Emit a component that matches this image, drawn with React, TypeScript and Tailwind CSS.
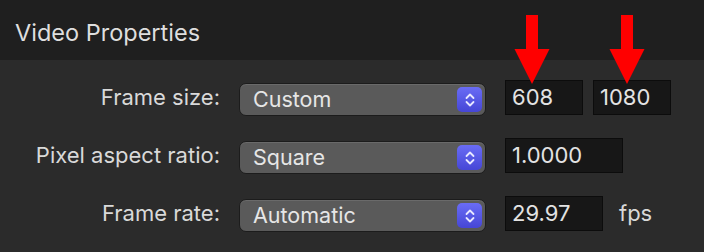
import React from "react";

const font = { fontFamily: "Inter, 'Noto Sans', sans-serif" };

function Stepper() {
  return (
    <div className="w-[25px] h-[25px] rounded-[5px] bg-gradient-to-b from-[#6a6cf5] to-[#4646d6] flex items-center justify-center">
      <svg width="12" height="16" viewBox="0 0 12 16" fill="none" stroke="#e8e8ff" strokeWidth="1.8" strokeLinecap="round" strokeLinejoin="round">
        <path d="M2.5 6 L6 2.5 L9.5 6" />
        <path d="M2.5 10 L6 13.5 L9.5 10" />
      </svg>
    </div>
  );
}

function Popup({ value }: { value: string }) {
  return (
    <div className="w-[247px] h-[33px] rounded-[7px] bg-[#5a5a5a] border border-[#1c1c1c] shadow-[inset_0_1px_0_#6a6a6a] flex items-center justify-between pl-[13px] pr-[3px]">
      <span className="text-[21.5px] text-[#e6e6e6]">{value}</span>
      <Stepper />
    </div>
  );
}

function Field({ value, w }: { value: string; w: string }) {
  return (
    <div className={`${w} h-[35px] bg-[#171717] border border-[#0c0c0c] flex items-center pl-[6px] text-[22px] text-[#e3e3e3]`}>
      {value}
    </div>
  );
}

function Arrow() {
  return (
    <svg width="36" height="70" viewBox="0 0 36 70" className="block">
      <rect x="12" y="0" width="12" height="36" fill="#ff0000" />
      <polygon points="0.5,34 35.5,34 18,69" fill="#ff0000" />
    </svg>
  );
}

export default function App() {
  return (
    <div className="w-[704px] h-[252px] bg-[#2b2b2b] relative overflow-hidden" style={font}>
      <div className="h-[60px] bg-[#1f1f1f] flex items-center pl-[15px] pt-[6px]">
        <span className="text-[23.5px] text-[#dedede]">Video Properties</span>
      </div>
      <div className="flex flex-col pt-[20px]">
        <div className="flex items-center h-[35px]">
          <div className="w-[220px] text-right text-[22px] text-[#d9d9d9]">Frame size:</div>
          <div className="ml-[19px] mt-[4px]"><Popup value="Custom" /></div>
          <div className="ml-[19px] flex gap-[10px]">
            <Field value="608" w="w-[78px]" />
            <Field value="1080" w="w-[78px]" />
          </div>
        </div>
        <div className="flex items-center h-[35px] mt-[23px]">
          <div className="w-[220px] text-right text-[22px] text-[#d9d9d9]">Pixel aspect ratio:</div>
          <div className="ml-[19px] mt-[4px]"><Popup value="Square" /></div>
          <div className="ml-[19px]"><Field value="1.0000" w="w-[118px]" /></div>
        </div>
        <div className="flex items-center h-[35px] mt-[23px]">
          <div className="w-[220px] text-right text-[22px] text-[#d9d9d9]">Frame rate:</div>
          <div className="ml-[19px] mt-[4px]"><Popup value="Automatic" /></div>
          <div className="ml-[19px]"><Field value="29.97" w="w-[98px]" /></div>
          <span className="ml-[16px] text-[22px] text-[#d9d9d9]">fps</span>
        </div>
      </div>
      <div className="absolute left-[514px] top-[15px]"><Arrow /></div>
      <div className="absolute left-[609px] top-[15px]"><Arrow /></div>
    </div>
  );
}
